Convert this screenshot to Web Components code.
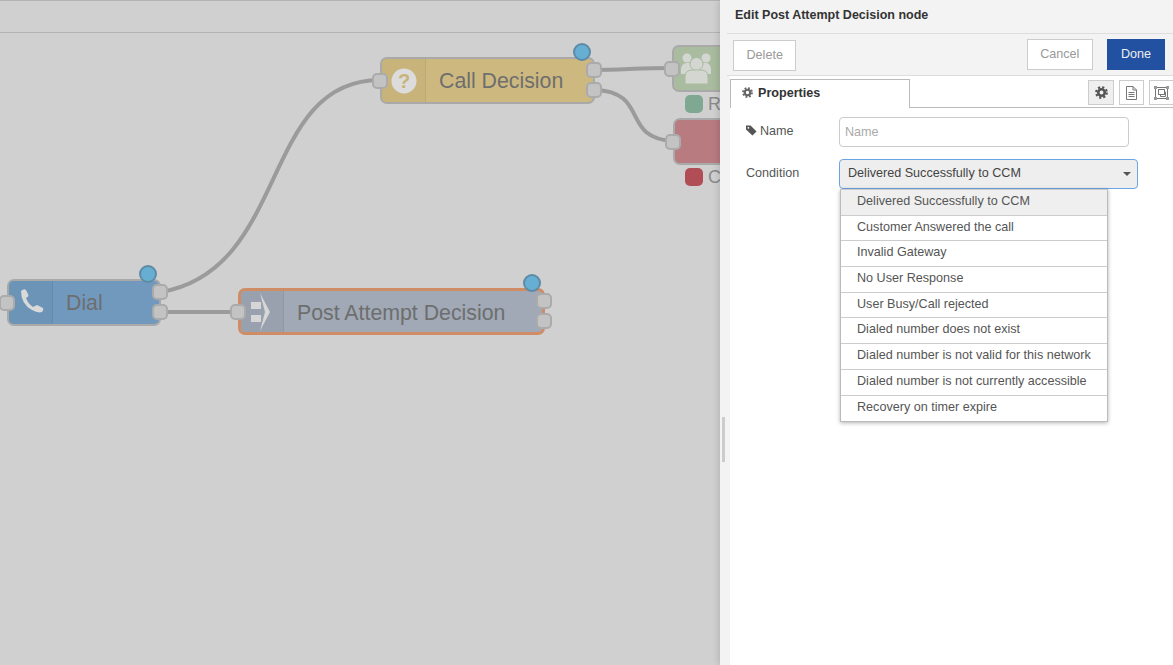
<!DOCTYPE html>
<html>
<head>
<meta charset="utf-8">
<title>Edit node</title>
<style>
    html, body { margin: 0; height: 100%; overflow: hidden; }
    body { display: flex; font-family: "Liberation Sans", Arial, sans-serif; }
</style>
</head>
<body>
<flow-canvas>
    <flow-node name="Dial" icon="phone" color="#7199bd" head="#6c94b7" changed in-port out="2" style="left:7px;top:279px;width:154px;--line:45px" split="46"></flow-node>
    <flow-node name="Post Attempt Decision" icon="arrow" color="#a0a9b5" head="#98a1ad" selected changed in-port out="2" style="left:238px;top:288px;width:307px;--line:44px" split="46"></flow-node>
    <flow-node name="Call Decision" icon="question" color="#cdb97f" head="#c8b47b" changed in-port out="2" style="left:380px;top:57px;width:215px;--line:44px" split="46"></flow-node>
    <flow-node icon="users" color="#a9bc9f" head="#a9bc9f" in-port style="left:672px;top:45px;width:70px"></flow-node>
    <flow-node color="#b87b80" head="#b87b80" in-port style="left:673px;top:118px;width:70px"></flow-node>
    <node-status color="#7fa893" style="left:685px;top:95px">R</node-status>
    <node-status color="#b14e55" style="left:685px;top:168px">C</node-status>
</flow-canvas>
<edit-tray>
    <span slot="title">Edit Post Attempt Decision node</span>
    <tray-button slot="left">Delete</tray-button>
    <tray-button slot="right">Cancel</tray-button>
    <tray-button slot="right" primary>Done</tray-button>
    <form-row label="Name" tag><name-input></name-input></form-row>
    <form-row label="Condition"><condition-select value="Delivered Successfully to CCM"></condition-select></form-row>
</edit-tray>

<script>
const ICONS = {
    phone: `<svg width="26" height="30" viewBox="0 0 26 30"><path d="M3 3 Q6 0 8 2 L10.5 7 Q10.5 9 8 10 Q9.5 15 15 19 Q17 18 19 17 L25 20 Q26 22 24 24 Q20 25.5 14 22 Q3 16 3 3z" fill="#d9d9d9"/></svg>`,
    arrow: `<svg width="24" height="40" viewBox="0 0 24 40"><path d="M10 1 L20 20 L10 39 L15 20z" fill="#d6d6d6"/><path d="M1 10 H11 V17 H1z M1 23 H11 V30 H1z" fill="#d6d6d6"/></svg>`,
    question: `<svg width="26" height="26" viewBox="0 0 26 26"><circle cx="13" cy="13" r="12.5" fill="#dcdcdc"/><text x="13" y="20" text-anchor="middle" font-family="Liberation Sans, sans-serif" font-weight="700" font-size="20" fill="#c8b47b">?</text></svg>`,
    users: `<svg width="30" height="31" viewBox="0 0 30 31"><g fill="#d4d6d2"><circle cx="6" cy="5" r="4.5"/><circle cx="25" cy="5" r="4.5"/><path d="M0 18 Q0 10 6 10 H25 Q30 10 30 18 V21 H0z"/><circle cx="15.5" cy="11" r="6.5" stroke="#a9bc9f"/><path d="M4 31 V24 Q4 17 11 17 H20 Q27 17 27 24 V31z" stroke="#a9bc9f"/></g></svg>`
};

class FlowCanvas extends HTMLElement {
    connectedCallback() {
        const shadow = this.attachShadow({ mode: 'open' });
        shadow.innerHTML = `
            <style>
                :host { display: block; position: relative; width: 720px; height: 665px; background: #d0d0d0; overflow: hidden; flex: none; }
                .rule { height: 1px; background: #b4b4b4; margin-bottom: 31px; }
                svg { position: absolute; left: 0; top: 0; }
            </style>
            <div class="rule"></div>
            <div class="rule"></div>
            <svg width="720" height="665" fill="none" stroke="#9b9b9b" stroke-width="4">
                <path d="M161 292 C290 270 260 80 380 80"/>
                <path d="M161 312 C190 312 210 312 238 312"/>
                <path d="M595 70 C620 70 640 68 672 68"/>
                <path d="M595 90 C650 92 620 138 673 141"/>
            </svg>
            <slot></slot>
        `;
    }
}
customElements.define("flow-canvas", FlowCanvas);

class FlowNode extends HTMLElement {
    connectedCallback() {
        const shadow = this.attachShadow({ mode: 'open' });
        const color = this.getAttribute('color');
        const head = this.getAttribute('head');
        const split = this.getAttribute('split');
        const selected = this.hasAttribute('selected');
        const outs = Number(this.getAttribute('out') || 0);
        const name = this.getAttribute('name') || '';
        const icon = ICONS[this.getAttribute('icon')] || '';
        let ports = '';
        if (this.hasAttribute('in-port')) ports += `<i class="port" style="left:-8px;top:16px"></i>`;
        for (let i = 0; i < outs; i++) ports += `<i class="port" style="right:-7px;top:${5 + i * 20}px"></i>`;
        shadow.innerHTML = `
            <style>
                :host { display: block; position: absolute; height: 47px; box-sizing: border-box; }
                .body { display: flex; height: 100%; box-sizing: border-box; border: ${selected ? '3px solid #d08c64' : '2px solid #a9a9a9'}; border-radius: 7px; background: ${color}; overflow: hidden; }
                .head { flex: none; width: ${split ? split - (selected ? 3 : 2) + 'px' : '44px'}; background: ${head}; display: flex; align-items: center; justify-content: center; ${split ? 'border-right: 1px solid rgba(0,0,0,.06);' : ''} box-sizing: border-box; }
                .name { padding-left: 13px; font-size: 21.3px; line-height: var(--line, 43px); color: #6e6e6e; white-space: nowrap; }
                .port { position: absolute; width: 12px; height: 12px; background: #c3c3c3; border: 2px solid #ababab; border-radius: 5px; }
                .dot { position: absolute; right: 4px; top: -14px; width: 14px; height: 14px; background: #67aed3; border: 2px solid #5d8ba5; border-radius: 50%; }
            </style>
            <div class="body"><div class="head">${icon}</div>${name ? `<div class="name">${name}</div>` : ''}</div>
            ${ports}
            ${this.hasAttribute('changed') ? '<i class="dot"></i>' : ''}
        `;
    }
}
customElements.define("flow-node", FlowNode);

class NodeStatus extends HTMLElement {
    connectedCallback() {
        const shadow = this.attachShadow({ mode: 'open' });
        shadow.innerHTML = `
            <style>
                :host { display: flex; position: absolute; align-items: center; gap: 5px; font-size: 18px; color: #8a8a8a; height: 18px; }
                i { width: 18px; height: 18px; border-radius: 5px; background: ${this.getAttribute('color')}; }
            </style>
            <i></i><slot></slot>
        `;
    }
}
customElements.define("node-status", NodeStatus);

class TrayButton extends HTMLElement {
    connectedCallback() {
        const shadow = this.attachShadow({ mode: 'open' });
        const primary = this.hasAttribute('primary');
        shadow.innerHTML = `
            <style>
                :host { display: block; }
                button {
                    display: block; height: 31px; padding: 0 ${primary ? '13px' : '12.5px'} 2px; font: 12.6px "Liberation Sans", Arial, sans-serif; box-sizing: border-box;
                    background: ${primary ? '#2251a2' : '#fff'}; color: ${primary ? '#eee' : '#999'};
                    border: 1px solid ${primary ? '#2251a2' : '#ccc'};
                }
            </style>
            <button><slot></slot></button>
        `;
    }
}
customElements.define("tray-button", TrayButton);

class EditTray extends HTMLElement {
    connectedCallback() {
        const shadow = this.attachShadow({ mode: 'open' });
        shadow.innerHTML = `
            <style>
                :host { display: flex; flex: none; width: 453px; height: 665px; background: #f3f3f3; color: #333; position: relative; box-shadow: -2px 0 6px rgba(0,0,0,.12); }
                .grip { flex: none; width: 7px; position: relative; }
                .grip i { position: absolute; left: 2px; top: 417px; width: 3px; height: 45px; background: #ccc; }
                .main { flex: 1; min-width: 0; display: flex; flex-direction: column; }
                .title { height: 33px; border-bottom: 1px solid #ddd; padding-left: 8px; font-size: 12.5px; font-weight: 700; line-height: 31px; }
                .bar { height: 41px; border-bottom: 1px solid #ddd; display: flex; justify-content: space-between; padding: 0 8px 0 6px; }
                .left { padding-top: 6px; }
                .right { display: flex; gap: 14px; padding-top: 5px; }
                .body { flex: 1; margin-left: 3px; background: #fff; padding-top: 3px; }
                .tabs { display: flex; height: 28px; border-bottom: 1px solid #bbb; justify-content: space-between; }
                .tab { width: 178px; border: 1px solid #bbb; border-bottom: 0; background: #fff; display: flex; align-items: center; padding-bottom: 3px; box-sizing: content-box; font-size: 12.6px; font-weight: 700; margin-bottom: -1px; height: 25px; }
                .tab svg { margin: 0 5px 0 11px; }
                .tools { display: flex; gap: 5px; padding-top: 1px; }
                .tool { width: 25px; height: 25px; box-sizing: border-box; border: 1px solid #ccc; background: #fff; display: flex; align-items: center; justify-content: center; }
                .tool.on { background: #efefef; width: 26px; }
                .form { padding: 9px 0 0 16px; }
            </style>
            <div class="grip"><i></i></div>
            <div class="main">
                <div class="title"><slot name="title"></slot></div>
                <div class="bar">
                    <div class="left"><slot name="left"></slot></div>
                    <div class="right"><slot name="right"></slot></div>
                </div>
                <div class="body">
                    <div class="tabs">
                        <div class="tab">
                            <svg width="11" height="11" viewBox="0 0 12 12"><circle cx="6" cy="6" r="3" fill="none" stroke="#666" stroke-width="2.4"/><circle cx="6" cy="6" r="4.9" fill="none" stroke="#666" stroke-width="2" stroke-dasharray="2 1.85"/></svg>
                            Properties
                        </div>
                        <div class="tools">
                            <div class="tool on"><svg width="13" height="13" viewBox="0 0 12 12"><circle cx="6" cy="6" r="3" fill="none" stroke="#555" stroke-width="2.4"/><circle cx="6" cy="6" r="4.9" fill="none" stroke="#555" stroke-width="2" stroke-dasharray="2 1.85"/></svg></div>
                            <div class="tool"><svg width="11" height="14" viewBox="0 0 11 14" fill="none" stroke="#777"><path d="M.5.5 H7 L10.5 4 V13.5 H.5z M7 .5 V4 H10.5"/><path d="M2.5 6.5 H8.5 M2.5 8.5 H8.5 M2.5 10.5 H8.5"/></svg></div>
                            <div class="tool" style="width:24px;border-right:0"><svg width="15" height="14" viewBox="0 0 15 14" fill="none" stroke="#777"><rect x="1.5" y="1.5" width="12" height="11"/><rect x="4.5" y="3.5" width="6" height="5"/><path d="M6.5 8.5 V10.5 H11.5 V6 H10.5"/><path d="M0 0 H3 V3 H0z M12 0 H15 V3 H12z M0 11 H3 V14 H0z M12 11 H15 V14 H12z" fill="#999" stroke="none"/></svg></div>
                        </div>
                    </div>
                    <div class="form"><slot></slot></div>
                </div>
            </div>
        `;
    }
}
customElements.define("edit-tray", EditTray);

class FormRow extends HTMLElement {
    connectedCallback() {
        const shadow = this.attachShadow({ mode: 'open' });
        const tag = this.hasAttribute('tag') ? `<svg width="11" height="11" viewBox="0 0 12 11"><path d="M0 0 H5 L11.5 6.5 L7 11 L0 4.5z" fill="#555"/><circle cx="2.6" cy="2.6" r="1" fill="#fff"/></svg>` : '';
        shadow.innerHTML = `
            <style>
                :host { display: flex; font-size: 12.6px; color: #555; margin-bottom: 12px; }
                label { flex: none; width: 93px; line-height: 28px; white-space: nowrap; }
                svg { vertical-align: -1px; margin-right: 3px; }
            </style>
            <label>${tag}${this.getAttribute('label')}</label>
            <slot></slot>
        `;
    }
}
customElements.define("form-row", FormRow);

class NameInput extends HTMLElement {
    connectedCallback() {
        const shadow = this.attachShadow({ mode: 'open' });
        shadow.innerHTML = `
            <style>
                :host { display: block; }
                input { display: block; box-sizing: border-box; width: 290px; height: 30px; padding: 0 5px; border: 1px solid #ccc; border-radius: 4px; font: 12.6px "Liberation Sans", Arial, sans-serif; outline: none; }
                input::placeholder { color: #aaa; opacity: 1; }
            </style>
            <input type="text" placeholder="Name">
        `;
    }
}
customElements.define("name-input", NameInput);

class ConditionSelect extends HTMLElement {
    connectedCallback() {
        const shadow = this.attachShadow({ mode: 'open' });
        const options = [
            'Delivered Successfully to CCM', 'Customer Answered the call', 'Invalid Gateway',
            'No User Response', 'User Busy/Call rejected', 'Dialed number does not exist',
            'Dialed number is not valid for this network', 'Dialed number is not currently accessible',
            'Recovery on timer expire'
        ];
        shadow.innerHTML = `
            <style>
                :host { display: block; position: relative; }
                .box { box-sizing: border-box; width: 299px; height: 30px; padding-left: 8px; background: #eee; border: 1px solid #6ba5e3; border-radius: 4px; font-size: 12.6px; line-height: 27px; color: #444; position: relative; }
                .box::after { content: ""; position: absolute; right: 6px; top: 12px; border: 4px solid transparent; border-top: 4px solid #555; border-bottom: 0; }
                ul { position: absolute; left: 1px; top: 30px; width: 268px; box-sizing: border-box; margin: 0; padding: 0; list-style: none; background: #fff; border: 1px solid #bbb; border-top-color: #ccc; box-shadow: 0 1px 4px rgba(0,0,0,.3); }
                li { height: 25.7px; box-sizing: border-box; padding-left: 16px; font-size: 12.6px; line-height: 23.6px; color: #555; border-bottom: 1px solid #ccc; white-space: nowrap; }
                li:last-child { border-bottom: 0; }
                li.on { background: #efefef; }
            </style>
            <div class="box">${this.getAttribute('value')}</div>
            <ul>${options.map((o, i) => `<li class="${i === 0 ? 'on' : ''}">${o}</li>`).join('')}</ul>
        `;
    }
}
customElements.define("condition-select", ConditionSelect);
</script>
</body>
</html>
